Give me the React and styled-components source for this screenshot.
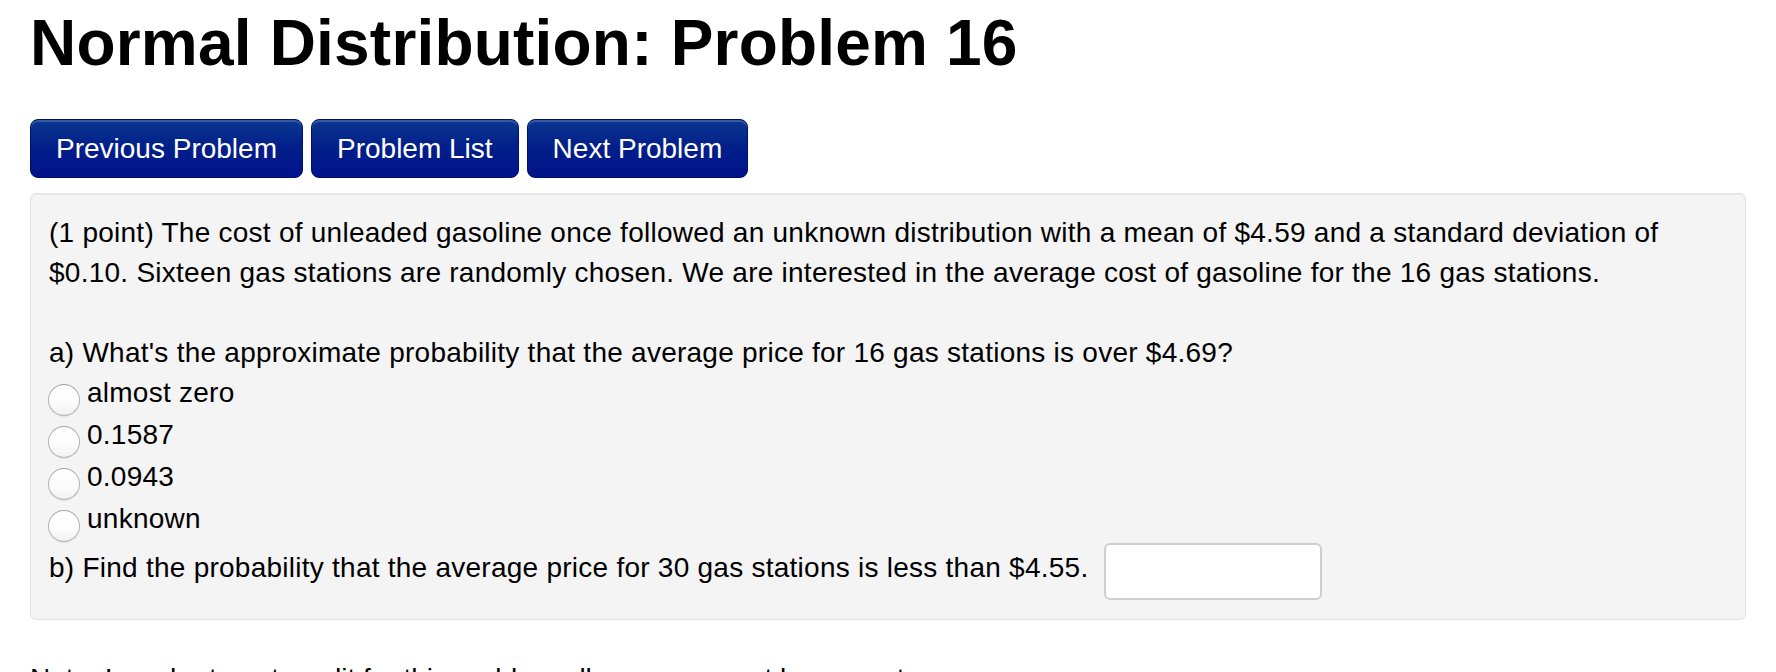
import React from "react"
import styled, { createGlobalStyle } from "styled-components"

const GlobalStyle = createGlobalStyle`
  html, body {
    margin: 0;
    padding: 0;
    background: #fff;
  }
  body {
    font-family: "Liberation Sans", Arial, Helvetica, sans-serif;
    font-size: 28px;
    line-height: 40px;
    color: #000;
  }
`

const Page = styled.div`
  padding: 0 30px;
  overflow: hidden;
  height: 672px;
  box-sizing: border-box;
`

const Title = styled.h1`
  margin: 0;
  padding-top: 7px;
  font-size: 64px;
  line-height: 72px;
  font-weight: 700;
  letter-spacing: 0.2px;
  color: #000;
`

const NavBar = styled.div`
  display: flex;
  gap: 8px;
  margin-top: 40px;
`

const NavButton = styled.a`
  display: block;
  padding: 9px 25px 8px;
  font-size: 28px;
  line-height: 40px;
  color: #fff;
  text-decoration: none;
  white-space: nowrap;
  border: 1px solid #001068;
  border-radius: 8px;
  background: linear-gradient(to bottom, #0a3790 0%, #03208a 45%, #00128a 100%);
  box-shadow: inset 0 2px 0 rgba(255, 255, 255, 0.18);
`

const Well = styled.div`
  margin-top: 15px;
  padding: 19px 18px;
  background: #f4f4f4;
  border: 1px solid #e2e2e2;
  border-radius: 6px;
  box-shadow: inset 0 1px 1px rgba(0, 0, 0, 0.05);
  letter-spacing: 0.25px;
`

const Para = styled.p`
  margin: 0 0 40px;
`

const Question = styled.div`
  margin: 0;
`

const Option = styled.label`
  display: flex;
  height: 42px;
  align-items: flex-start;
`

const Radio = styled.input.attrs({ type: "radio" })`
  appearance: none;
  -webkit-appearance: none;
  flex: none;
  width: 32px;
  height: 32px;
  margin: 11px 7px 0 -1px;
  border-radius: 50%;
  border: 1px solid #b4b4b4;
  border-top-color: #a2a2a2;
  background: linear-gradient(to bottom, #ffffff 0%, #fcfcfc 60%, #f2f2f2 100%);
  box-shadow: 0 1px 1px rgba(0, 0, 0, 0.06);
  box-sizing: border-box;
`

const AnswerRow = styled.div`
  display: flex;
  align-items: flex-start;
`

const AnswerText = styled.span`
  margin-top: 7px;
`

const AnswerBox = styled.input.attrs({ type: "text" })`
  width: 218px;
  height: 57px;
  margin: 2px 0 0 16px;
  box-sizing: border-box;
  border: 2px solid #cfcfcf;
  border-radius: 6px;
  background: #fff;
  font: inherit;
`

const Note = styled.p`
  margin: 39px 0 0;
`

const options = ["almost zero", "0.1587", "0.0943", "unknown"]

export default function App() {
  return (
    <>
      <GlobalStyle />
      <Page>
        <Title>Normal Distribution: Problem 16</Title>
        <NavBar>
          <NavButton href="#">Previous Problem</NavButton>
          <NavButton href="#">Problem List</NavButton>
          <NavButton href="#">Next Problem</NavButton>
        </NavBar>
        <Well>
          <Para>
            (1 point) The cost of unleaded gasoline once followed an unknown
            distribution with a mean of $4.59 and a standard deviation of
            <br />
            $0.10. Sixteen gas stations are randomly chosen. We are interested
            in the average cost of gasoline for the 16 gas stations.
          </Para>
          <Question>
            a) What's the approximate probability that the average price for 16
            gas stations is over $4.69?
          </Question>
          {options.map((o) => (
            <Option key={o}>
              <Radio name="q1" />
              <span>{o}</span>
            </Option>
          ))}
          <AnswerRow>
            <AnswerText>
              b) Find the probability that the average price for 30 gas
              stations is less than $4.55.
            </AnswerText>
            <AnswerBox />
          </AnswerRow>
        </Well>
        <Note>
          Note: In order to get credit for this problem all answers must be
          correct.
        </Note>
      </Page>
    </>
  )
}
